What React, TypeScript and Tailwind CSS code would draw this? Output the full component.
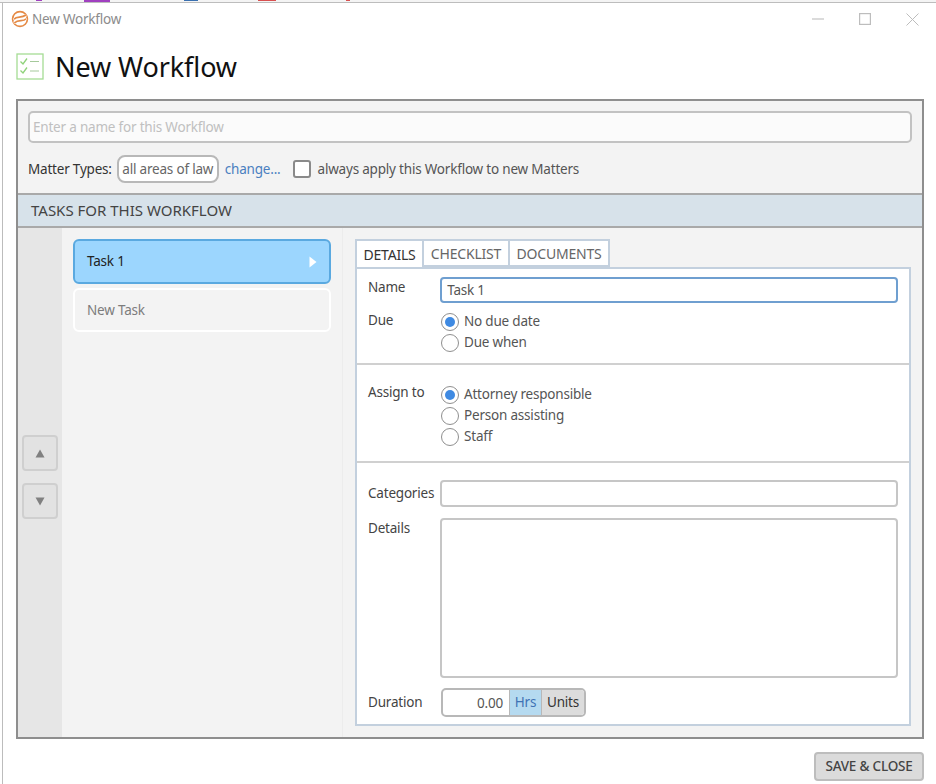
import React from "react";

function Radio({ on, label }: { on?: boolean; label: string }) {
  return (
    <div className="flex items-center h-[21px]">
      <span className="w-[18px] h-[18px] rounded-full border border-[#8f8f8f] bg-white flex items-center justify-center shrink-0">
        {on && <span className="w-[10px] h-[10px] rounded-full bg-[#3f8ae2]" />}
      </span>
      <span className="ml-[5px] text-[#555]">{label}</span>
    </div>
  );
}

function Tab({ w, active, label }: { w: string; active?: boolean; label: string }) {
  return (
    <div
      className={`${w} h-[28px] flex items-center justify-center border-t-2 border-r-2 border-[#c3d0de] text-[14px] ${
        active ? "bg-white text-[#333] border-l-2 -mb-[1px] relative z-10" : "bg-white text-[#666] border-b-2"
      }`}
    >
      {label}
    </div>
  );
}

export default function App() {
  return (
    <div
      className="w-[936px] h-[784px] overflow-hidden bg-white flex flex-col text-[13.5px] text-[#333] tracking-[-0.2px]"
      style={{ fontFamily: '"Noto Sans", "Open Sans", sans-serif' }}
    >
      {/* Desktop remnant above the window */}
      <div className="h-[3px] bg-[#f4f4f4] border-b border-[#bdbdbd] flex shrink-0">
        <div className="ml-[36px] w-[6px] h-[1px] bg-[#a040c0]" />
        <div className="ml-[42px] w-[26px] h-[2px] bg-[#a040c0]" />
        <div className="ml-[74px] w-[14px] h-[1px] bg-[#3a70b0]" />
        <div className="ml-[60px] w-[18px] h-[1px] bg-[#d85050]" />
        <div className="ml-[70px] w-[4px] h-[1px] bg-[#d85050]" />
      </div>

      <div className="flex-1 flex flex-col ml-[2px] border-l border-[#bcbcbc] min-h-0">
        {/* Title bar */}
        <div className="h-[32px] flex items-center pl-[8px] shrink-0">
          <svg width="18" height="18" viewBox="0 0 18 18" fill="none" className="shrink-0">
            <circle cx="9" cy="9" r="7.4" stroke="#e58a45" strokeWidth="1.7" />
            <path d="M2.8 9.5C6 5.5 10 9 15.2 5.2M2.8 12.8C8 9 12 12.5 15.4 8.6" stroke="#ffffff" strokeWidth="2.6" />
            <path d="M3 9.2C6 5.4 10 8.8 15 5M3.4 12.8C8 9 12 12.4 15.2 8.8" stroke="#e58a45" strokeWidth="1.7" />
          </svg>
          <span className="ml-[3px] text-[13.5px] text-[#8c8c8c]">New Workflow</span>
          <div className="ml-auto flex items-center mr-[17px] gap-[35px]">
            <svg width="12" height="12" viewBox="0 0 12 12">
              <path d="M0 6H12" stroke="#c4c4c4" strokeWidth="1.2" />
            </svg>
            <svg width="12" height="12" viewBox="0 0 12 12" fill="none">
              <rect x="0.6" y="0.6" width="10.8" height="10.8" stroke="#bdbdbd" strokeWidth="1.2" />
            </svg>
            <svg width="13" height="13" viewBox="0 0 13 13" fill="none">
              <path d="M0.5 0.5L12.5 12.5M12.5 0.5L0.5 12.5" stroke="#bdbdbd" strokeWidth="1" />
            </svg>
          </div>
        </div>

        {/* Heading */}
        <div className="h-[64px] flex items-center pl-[13px] shrink-0">
          <svg width="28" height="28" viewBox="0 0 28 28" fill="none" className="shrink-0">
            <rect x="1" y="1" width="26" height="25" stroke="#a5dc94" strokeWidth="1.3" />
            <path d="M4.5 8.5L7 11L11 5.5M4.5 17.5L7 20L11 14.5" stroke="#8fd27a" strokeWidth="1.3" />
            <path d="M14 8.5H23M14 18H23" stroke="#a5c99b" strokeWidth="1.2" />
          </svg>
          <span className="ml-[11px] text-[27px] text-[#111] tracking-[-0.1px]">New Workflow</span>
        </div>

        {/* Main panel */}
        <div className="ml-[13px] w-[908px] h-[640px] border-2 border-[#8e8e8e] bg-[#f3f3f3] flex flex-col shrink-0">
          <div className="h-[92px] px-[10px] pt-[10px] shrink-0">
            <div className="h-[32px] w-[884px] bg-[#fbfbfb] border-2 border-[#c2c2c2] rounded-[5px] flex items-center pl-[3px] text-[#c0c0c0]">
              Enter a name for this Workflow
            </div>
            <div className="mt-[12px] flex items-center h-[28px]">
              <span className="text-[#333]">Matter Types:</span>
              <span className="ml-[5px] w-[102px] h-[28px] rounded-[8px] border-2 border-[#b8b8b8] bg-white flex items-center justify-center text-[#666]">
                all areas of law
              </span>
              <span className="ml-[6px] text-[#4a7fc0]">change...</span>
              <span className="ml-[12px] w-[18px] h-[18px] rounded-[3px] border-2 border-[#8a8a8a] bg-white" />
              <span className="ml-[7px] text-[#555]">always apply this Workflow to new Matters</span>
            </div>
          </div>

          <div className="h-[35px] bg-[#d7e2ea] border-y-2 border-[#a9a9a9] flex items-center pl-[13px] text-[15px] text-[#444] shrink-0 tracking-normal">
            TASKS FOR THIS WORKFLOW
          </div>

          <div className="flex-1 flex min-h-0">
            {/* Reorder rail */}
            <div className="w-[44px] bg-[#e6e6e6] flex flex-col items-center pt-[207px] pl-[0px] gap-[12px] shrink-0">
              <div className="w-[36px] h-[36px] rounded-[4px] border-2 border-[#cfcfcf] bg-[#e2e2e2] flex items-center justify-center">
                <svg width="10" height="9" viewBox="0 0 10 9">
                  <path d="M5 0.5L9.5 8.5H0.5Z" fill="#808080" />
                </svg>
              </div>
              <div className="w-[36px] h-[36px] rounded-[4px] border-2 border-[#cfcfcf] bg-[#e2e2e2] flex items-center justify-center">
                <svg width="10" height="9" viewBox="0 0 10 9">
                  <path d="M5 8.5L9.5 0.5H0.5Z" fill="#808080" />
                </svg>
              </div>
            </div>

            {/* Task list */}
            <div className="w-[281px] pl-[11px] pt-[11px] border-r border-[#ececec] shrink-0">
              <div className="w-[258px] h-[45px] rounded-[6px] border-2 border-[#5aa9e0] bg-[#9cd6fe] flex items-center pl-[12px] pr-[12px] text-[#222]">
                Task 1
                <svg width="8" height="12" viewBox="0 0 8 12" className="ml-auto">
                  <path d="M0.5 0.5L7.5 6L0.5 11.5Z" fill="#ffffff" />
                </svg>
              </div>
              <div className="mt-[4px] w-[258px] h-[44px] rounded-[6px] border-2 border-white bg-[#f3f3f3] flex items-center pl-[12px] text-[#7c7c7c]">
                New Task
              </div>
            </div>

            {/* Details */}
            <div className="flex-1 pl-[12px] pt-[11px] min-w-0">
              <div className="flex">
                <Tab w="w-[69px]" active label="DETAILS" />
                <Tab w="w-[86px]" label="CHECKLIST" />
                <Tab w="w-[100px]" label="DOCUMENTS" />
              </div>
              <div className="w-[556px] h-[459px] border-2 border-[#c3d0de] bg-white flex flex-col text-[#444]">
                <div className="h-[96px] border-b-2 border-[#d0d0d0] px-[11px] pt-[8px] shrink-0">
                  <div className="flex">
                    <span className="w-[73px] leading-[24px] -mt-[2px]">Name</span>
                    <div className="w-[463px] h-[26px] rounded-[4px] border-2 border-[#6f9fd0] flex items-center pl-[5px] text-[#555]">
                      Task 1
                    </div>
                  </div>
                  <div className="flex mt-[8px]">
                    <span className="w-[73px] leading-[24px] -mt-[3px]">Due</span>
                    <div>
                      <Radio on label="No due date" />
                      <Radio label="Due when" />
                    </div>
                  </div>
                </div>
                <div className="h-[98px] border-b-2 border-[#d0d0d0] px-[11px] pt-[20px] flex shrink-0">
                  <span className="w-[73px] leading-[14px]">Assign to</span>
                  <div className="-mt-[1px]">
                    <Radio on label="Attorney responsible" />
                    <Radio label="Person assisting" />
                    <Radio label="Staff" />
                  </div>
                </div>
                <div className="flex-1 px-[11px] pt-[17px]">
                  <div className="flex items-center">
                    <span className="w-[73px]">Categories</span>
                    <div className="w-[463px] h-[27px] rounded-[4px] border-2 border-[#c6c6c6]" />
                  </div>
                  <div className="flex mt-[11px]">
                    <span className="w-[73px] leading-[20px]">Details</span>
                    <div className="w-[463px] h-[160px] rounded-[4px] border-2 border-[#c6c6c6]" />
                  </div>
                  <div className="flex items-center mt-[10px]">
                    <span className="w-[73px]">Duration</span>
                    <div className="w-[145px] h-[29px] rounded-[5px] border-2 border-[#b8b8b8] flex overflow-hidden">
                      <span className="w-[66px] flex items-center justify-end pr-[6px] pt-[2px] text-[#555]">0.00</span>
                      <span className="w-[33px] bg-[#b5daf0] border-x border-[#b8b8b8] flex items-center justify-center text-[#3f72b5]">Hrs</span>
                      <span className="flex-1 bg-[#dcdcdc] flex items-center justify-center text-[#333]">Units</span>
                    </div>
                  </div>
                </div>
              </div>
            </div>
          </div>
        </div>

        {/* Footer */}
        <div className="flex justify-end pr-[12px] pt-[13px]">
          <div className="w-[110px] h-[29px] rounded-[4px] border-2 border-[#bdbdbd] bg-[#dbdbdb] flex items-center justify-center text-[#444] font-medium">
            SAVE &amp; CLOSE
          </div>
        </div>
      </div>
    </div>
  );
}
